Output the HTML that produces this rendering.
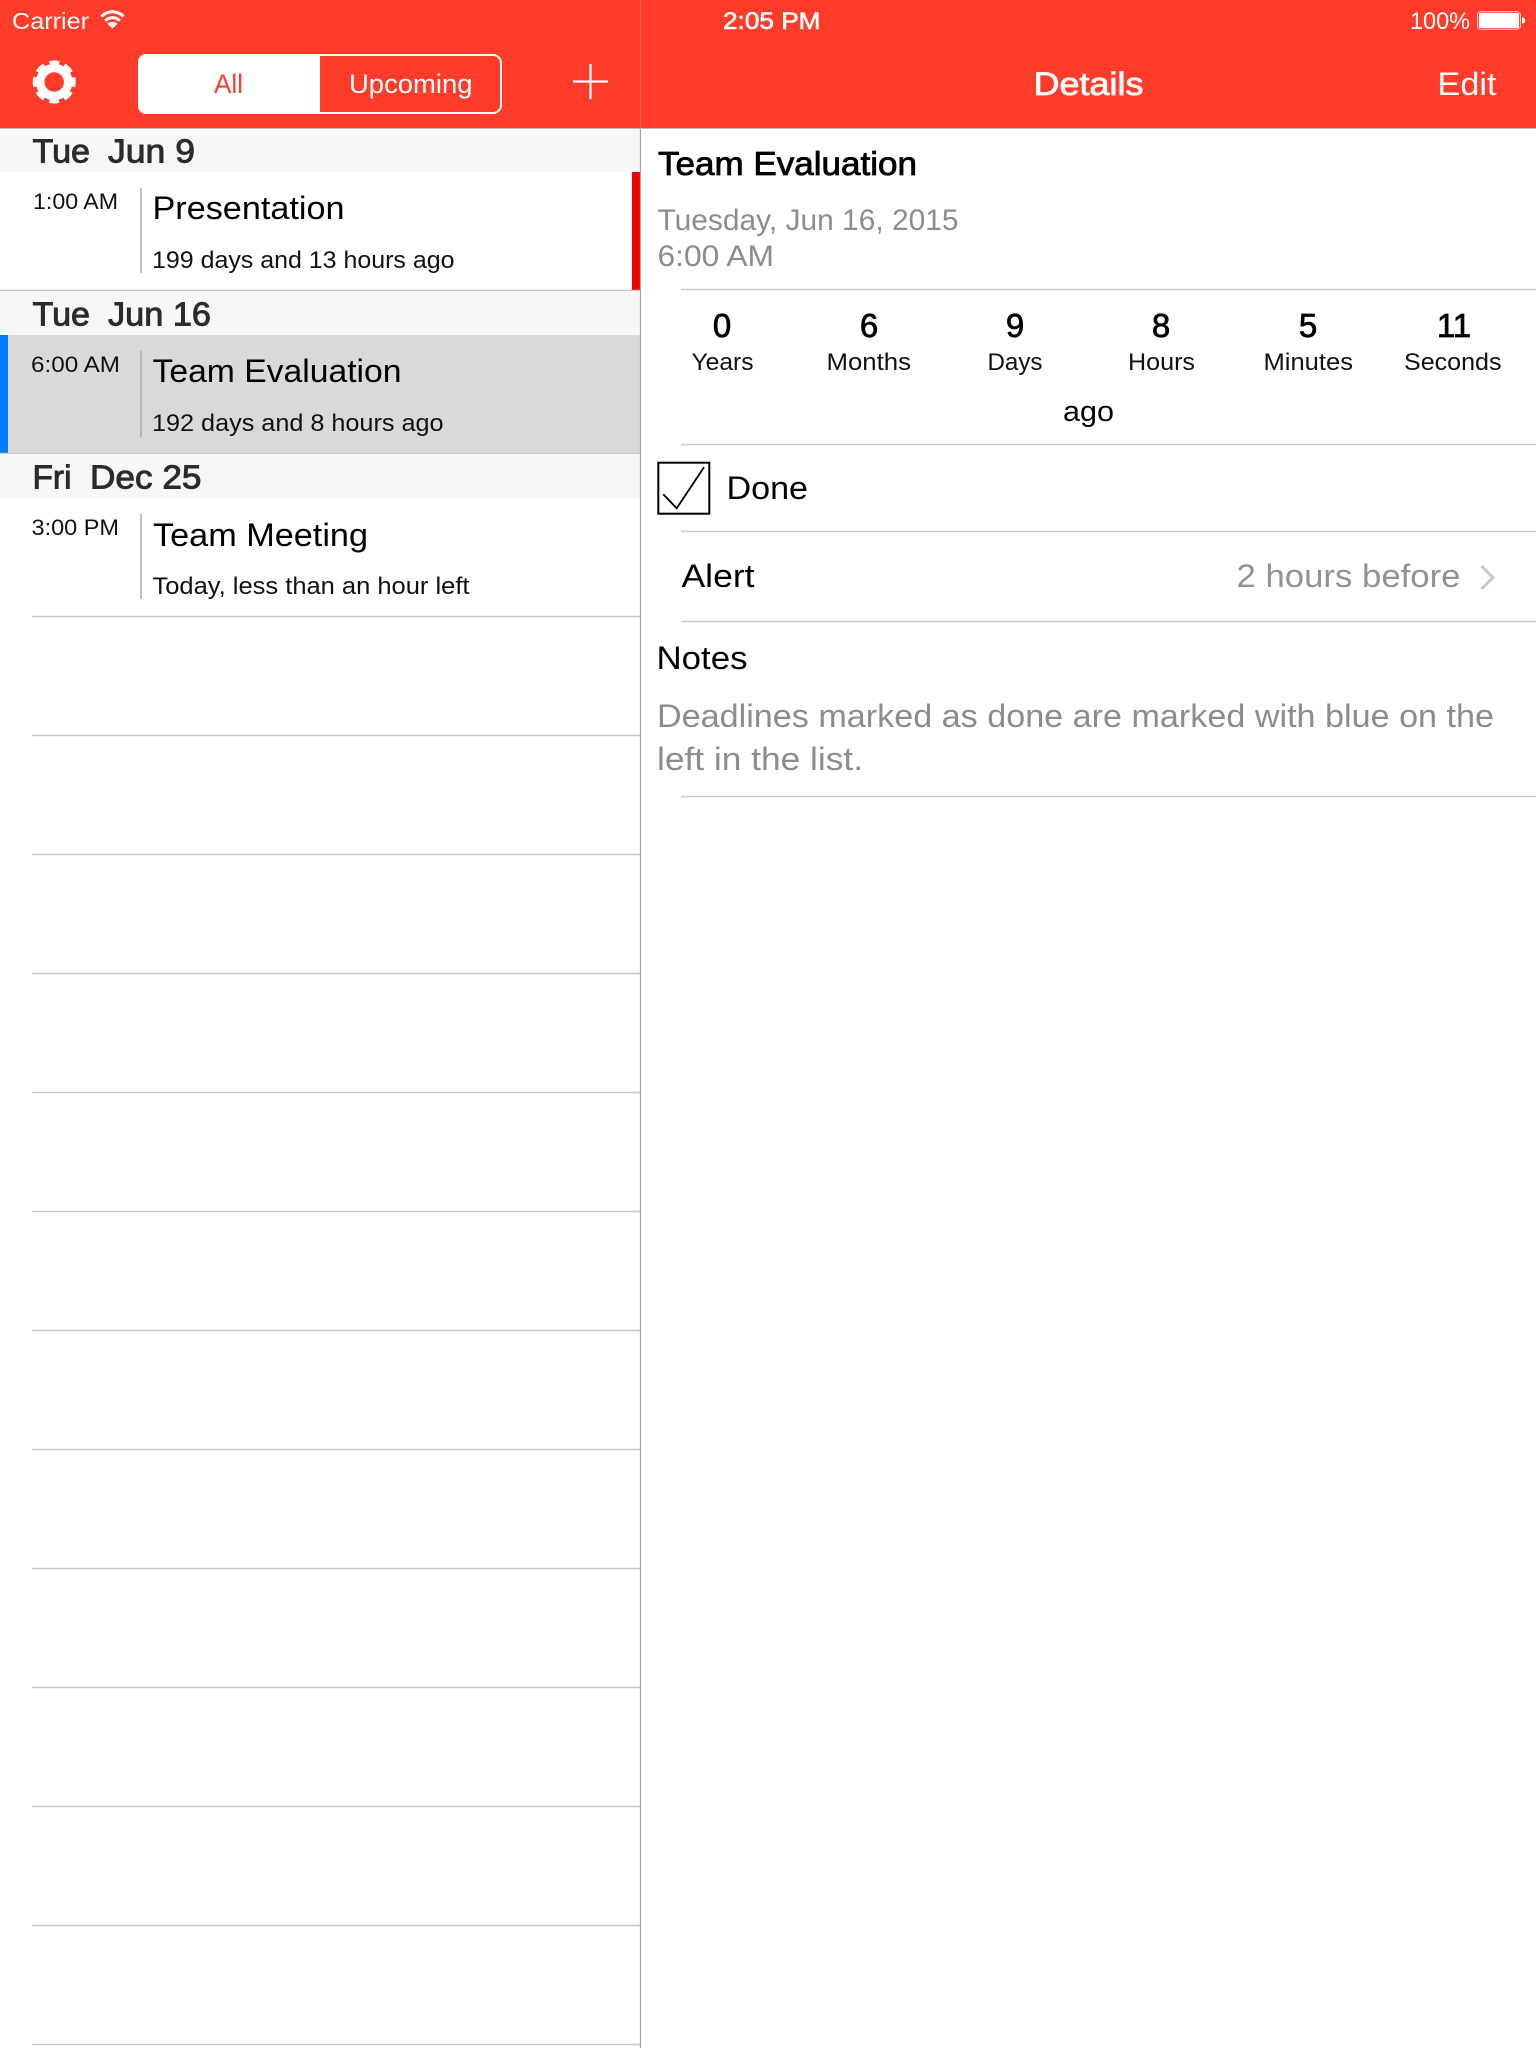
<!DOCTYPE html>
<html lang="en"><head><meta charset="utf-8"><title>Details</title>
<style>
html,body{margin:0;padding:0;background:#fff;width:1536px;height:2048px;overflow:hidden}
svg{display:block}
text{font-family:"Liberation Sans",sans-serif;white-space:pre}
.w{fill:#fff}.k{fill:#000}.g{fill:#8c8c8c}
.h{fill:#2b2b2b;font-size:33px;stroke:#2b2b2b;stroke-width:.9px}
.sep{stroke:#c8c8c8;stroke-width:1.5}
.vs{stroke:#aaa;stroke-width:1.5}
.t{font-size:22px;fill:#111}
.n{font-size:33px;fill:#000;stroke:#000;stroke-width:.75px;text-anchor:middle}
.l{font-size:24px;fill:#111}
</style></head><body>
<svg width="1536" height="2048" viewBox="0 0 1536 2048" xmlns="http://www.w3.org/2000/svg">
<rect width="1536" height="2048" fill="#fff"/>
<rect width="1536" height="128" fill="#ff3b2a"/>
<line x1="0" y1="128.500" x2="1536" y2="128.500" stroke="#bbb" stroke-width="1"/>

<!-- status bar -->
<text x="12" y="29" font-size="23" class="w" textLength="77" lengthAdjust="spacingAndGlyphs">Carrier</text>
<g fill="none" stroke="#fff" stroke-width="3" stroke-linecap="butt">
<path d="M101.500 16.500C107.500 10.200 117.500 10.200 123.500 16.500"/>
<path d="M105.200 20.800C109.500 16.500 115.500 16.500 119.800 20.800"/>
</g>
<path d="M112.500 28.500L107.300 23.700C110.400 21.200 114.600 21.200 117.700 23.700Z" fill="#fff"/>
<text x="723" y="29" font-size="24" class="w" stroke="#fff" stroke-width=".6" textLength="97.500" lengthAdjust="spacingAndGlyphs">2:05 PM</text>
<text x="1410" y="29" font-size="24" class="w" textLength="60" lengthAdjust="spacingAndGlyphs">100%</text>
<rect x="1477.600" y="11.800" width="42.800" height="17.400" rx="3" fill="none" stroke="#fff" stroke-opacity=".8" stroke-width="1"/>
<rect x="1479" y="13" width="40" height="15" rx="1.500" fill="#fff"/>
<path d="M1522 17.500c2 0 3.200 1.200 3.200 3s-1.200 3-3.200 3z" fill="#fff"/>

<!-- left nav -->
<g fill="none" stroke="#fff">
<circle cx="54.200" cy="82" r="14" stroke-width="8.500"/>
<circle cx="54.200" cy="82" r="19.200" stroke-width="4.600" stroke-dasharray="9.500 5.580" stroke-dashoffset="4.750"/>
</g>
<rect x="139" y="55" width="362" height="58" rx="8" fill="#ff3b2a" stroke="#fff" stroke-width="2"/>
<path d="M320 54H146a8 8 0 0 0-8 8V106a8 8 0 0 0 8 8H320Z" fill="#fff"/>
<text x="214" y="93" font-size="27" fill="#ff3b30" textLength="29" lengthAdjust="spacingAndGlyphs">All</text>
<text x="349" y="93" font-size="27" class="w" textLength="123.500" lengthAdjust="spacingAndGlyphs">Upcoming</text>
<path d="M590.500 64V99M573 81.500H608" stroke="#fff" stroke-width="2.200" fill="none"/>

<!-- right nav -->
<text x="1033.500" y="95" font-size="32" class="w" stroke="#fff" stroke-width=".8" textLength="110" lengthAdjust="spacingAndGlyphs">Details</text>
<text x="1437.500" y="95" font-size="32" class="w" textLength="59" lengthAdjust="spacingAndGlyphs">Edit</text>

<!-- sections -->
<rect x="0" y="129" width="640" height="43" fill="#f7f7f7"/>
<text x="32.500" y="162.500" class="h" textLength="57.500" lengthAdjust="spacingAndGlyphs">Tue</text>
<text x="108" y="162.500" class="h" textLength="87" lengthAdjust="spacingAndGlyphs">Jun 9</text>
<rect x="632" y="172" width="8" height="118" fill="#f50000"/>
<text x="33" y="209" class="t" textLength="85" lengthAdjust="spacingAndGlyphs">1:00 AM</text>
<line x1="141" y1="188" x2="141" y2="273" class="vs"/>
<text x="152.500" y="219" font-size="32" class="k" textLength="192" lengthAdjust="spacingAndGlyphs">Presentation</text>
<text x="152" y="268" class="l" textLength="302.500" lengthAdjust="spacingAndGlyphs">199 days and 13 hours ago</text>
<line x1="0" y1="290.500" x2="640" y2="290.500" class="sep"/>

<rect x="0" y="291" width="640" height="44" fill="#f7f7f7"/>
<text x="32.500" y="325.500" class="h" textLength="57.500" lengthAdjust="spacingAndGlyphs">Tue</text>
<text x="108" y="325.500" class="h" textLength="103" lengthAdjust="spacingAndGlyphs">Jun 16</text>
<rect x="0" y="335" width="640" height="118" fill="#d9d9d9"/>
<rect x="0" y="335" width="8" height="118" fill="#007aff"/>
<text x="31" y="372" class="t" textLength="89" lengthAdjust="spacingAndGlyphs">6:00 AM</text>
<line x1="141" y1="351" x2="141" y2="437" class="vs"/>
<text x="152.500" y="382" font-size="32" class="k" textLength="249" lengthAdjust="spacingAndGlyphs">Team Evaluation</text>
<text x="152" y="431" class="l" textLength="291.500" lengthAdjust="spacingAndGlyphs">192 days and 8 hours ago</text>
<line x1="0" y1="453.500" x2="640" y2="453.500" class="sep"/>

<rect x="0" y="454" width="640" height="44" fill="#f7f7f7"/>
<text x="32.500" y="488.500" class="h" textLength="39" lengthAdjust="spacingAndGlyphs">Fri</text>
<text x="90" y="488.500" class="h" textLength="111.500" lengthAdjust="spacingAndGlyphs">Dec 25</text>
<text x="31.500" y="535" class="t" textLength="87.500" lengthAdjust="spacingAndGlyphs">3:00 PM</text>
<line x1="141" y1="514" x2="141" y2="599" class="vs"/>
<text x="153" y="546" font-size="32" class="k" textLength="215" lengthAdjust="spacingAndGlyphs">Team Meeting</text>
<text x="152.500" y="594" class="l" textLength="317" lengthAdjust="spacingAndGlyphs">Today, less than an hour left</text>

<!-- empty rows -->
<g class="sep">
<line x1="32" y1="616.500" x2="640" y2="616.500"/>
<line x1="32" y1="735.500" x2="640" y2="735.500"/>
<line x1="32" y1="854.500" x2="640" y2="854.500"/>
<line x1="32" y1="973.500" x2="640" y2="973.500"/>
<line x1="32" y1="1092.500" x2="640" y2="1092.500"/>
<line x1="32" y1="1211.500" x2="640" y2="1211.500"/>
<line x1="32" y1="1330.500" x2="640" y2="1330.500"/>
<line x1="32" y1="1449.500" x2="640" y2="1449.500"/>
<line x1="32" y1="1568.500" x2="640" y2="1568.500"/>
<line x1="32" y1="1687.500" x2="640" y2="1687.500"/>
<line x1="32" y1="1806.500" x2="640" y2="1806.500"/>
<line x1="32" y1="1925.500" x2="640" y2="1925.500"/>
<line x1="32" y1="2044.500" x2="640" y2="2044.500"/>
</g>

<!-- divider -->
<line x1="640.500" y1="0" x2="640.500" y2="128" stroke="#e0685a" stroke-width="1"/>
<line x1="640.500" y1="129" x2="640.500" y2="2048" stroke="#a8a8a8" stroke-width="1.200"/>

<!-- details -->
<text x="658" y="175" font-size="33" class="k" stroke="#000" stroke-width=".8" textLength="259" lengthAdjust="spacingAndGlyphs">Team Evaluation</text>
<text x="657.500" y="230" font-size="30" class="g" textLength="301" lengthAdjust="spacingAndGlyphs">Tuesday, Jun 16, 2015</text>
<text x="657.500" y="266" font-size="30" class="g" textLength="116.500" lengthAdjust="spacingAndGlyphs">6:00 AM</text>
<line x1="681" y1="289.500" x2="1536" y2="289.500" class="sep"/>

<text x="722" y="337" class="n">0</text>
<text x="869" y="337" class="n">6</text>
<text x="1015" y="337" class="n">9</text>
<text x="1161" y="337" class="n">8</text>
<text x="1308" y="337" class="n">5</text>
<text x="1454" y="337" class="n">11</text>
<text x="691.500" y="370" class="l" textLength="62" lengthAdjust="spacingAndGlyphs">Years</text>
<text x="826.500" y="370" class="l" textLength="84.500" lengthAdjust="spacingAndGlyphs">Months</text>
<text x="987.500" y="370" class="l" textLength="55" lengthAdjust="spacingAndGlyphs">Days</text>
<text x="1128" y="370" class="l" textLength="67" lengthAdjust="spacingAndGlyphs">Hours</text>
<text x="1263.500" y="370" class="l" textLength="89.500" lengthAdjust="spacingAndGlyphs">Minutes</text>
<text x="1404" y="370" class="l" textLength="97.500" lengthAdjust="spacingAndGlyphs">Seconds</text>
<text x="1063" y="421" font-size="29" class="k" textLength="51" lengthAdjust="spacingAndGlyphs">ago</text>
<line x1="681" y1="444.500" x2="1536" y2="444.500" class="sep"/>

<rect x="658.300" y="462.700" width="51" height="51" fill="#fff" stroke="#000" stroke-width="2"/>
<path d="M663.300 494.300L676.700 508.300L704 467.300" fill="none" stroke="#000" stroke-width="1.800"/>
<text x="726.500" y="499" font-size="32" class="k" textLength="81.500" lengthAdjust="spacingAndGlyphs">Done</text>
<line x1="681" y1="531.500" x2="1536" y2="531.500" class="sep"/>

<text x="681.500" y="587" font-size="32" class="k" textLength="73" lengthAdjust="spacingAndGlyphs">Alert</text>
<text x="1236.500" y="587" font-size="32" fill="#929292" textLength="224" lengthAdjust="spacingAndGlyphs">2 hours before</text>
<path d="M1481.500 566L1493 577.500L1481.500 589" fill="none" stroke="#c7c7cc" stroke-width="3"/>
<line x1="681" y1="621.500" x2="1536" y2="621.500" class="sep"/>

<text x="656.500" y="669" font-size="32" class="k" textLength="91" lengthAdjust="spacingAndGlyphs">Notes</text>
<text x="657" y="727" font-size="32" class="g" textLength="837" lengthAdjust="spacingAndGlyphs">Deadlines marked as done are marked with blue on the</text>
<text x="657" y="770" font-size="32" class="g" textLength="206" lengthAdjust="spacingAndGlyphs">left in the list.</text>
<line x1="681" y1="796.500" x2="1536" y2="796.500" class="sep"/>
</svg>
</body></html>
